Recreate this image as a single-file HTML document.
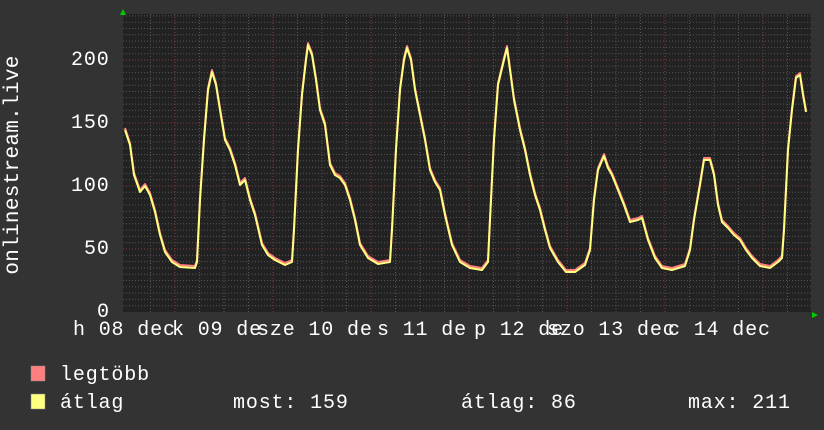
<!DOCTYPE html>
<html><head><meta charset="utf-8"><style>
html,body{margin:0;padding:0;background:#333;}
body{width:824px;height:430px;position:relative;overflow:hidden;font-family:"Liberation Mono","DejaVu Sans Mono",monospace;color:#fff;}
.t{position:absolute;font-size:20px;line-height:20px;white-space:pre;letter-spacing:0.85px;}
</style></head><body>
<svg width="824" height="430" style="position:absolute;left:0;top:0">
<rect x="123" y="14" width="688" height="298" fill="#222"/>
<g id="g"></g>
<polygon points="123,9 120,15 126,15" fill="#0c0"/>
<polygon points="818,315 812,312 812,318" fill="#0c0"/>
<g fill="none" stroke-width="2" stroke-linejoin="round">
<polyline stroke="#ff7f7f" transform="translate(0,-2)" points="125,130 130,145 134,175 140,192 145,186 150,195 155,212 160,235 165,252 172,262 180,267 195,268 197,262 200,200 204,140 208,90 212,72 216,85 220,110 225,140 230,150 235,165 240,185 245,180 250,200 255,215 262,245 268,255 275,260 285,265 292,262 294,230 298,150 302,95 306,60 308,45 312,55 316,80 320,110 325,125 330,165 335,175 340,178 345,185 350,200 355,220 360,245 368,258 378,264 390,262 392,230 396,150 400,90 404,60 407,48 411,60 415,90 420,115 425,140 430,170 435,182 440,190 445,215 452,245 460,262 470,268 482,270 488,262 490,220 494,140 498,85 504,60 507,48 510,70 514,100 520,130 525,150 530,175 535,195 540,210 545,230 550,248 558,262 566,272 575,272 585,265 590,250 594,200 598,170 604,156 608,168 612,175 618,190 624,205 630,222 638,220 642,218 648,240 655,258 662,268 672,270 685,266 690,250 694,220 700,185 704,160 710,160 714,175 718,205 722,222 728,228 734,235 740,240 746,250 752,258 760,266 770,268 778,262 782,258 784,230 788,150 792,110 796,78 800,75 803,95 806,112"/>
<polyline stroke="#ffff80" points="125,130 130,145 134,175 140,192 145,186 150,195 155,212 160,235 165,252 172,262 180,267 195,268 197,262 200,200 204,140 208,90 212,72 216,85 220,110 225,140 230,150 235,165 240,185 245,180 250,200 255,215 262,245 268,255 275,260 285,265 292,262 294,230 298,150 302,95 306,60 308,45 312,55 316,80 320,110 325,125 330,165 335,175 340,178 345,185 350,200 355,220 360,245 368,258 378,264 390,262 392,230 396,150 400,90 404,60 407,48 411,60 415,90 420,115 425,140 430,170 435,182 440,190 445,215 452,245 460,262 470,268 482,270 488,262 490,220 494,140 498,85 504,60 507,48 510,70 514,100 520,130 525,150 530,175 535,195 540,210 545,230 550,248 558,262 566,272 575,272 585,265 590,250 594,200 598,170 604,156 608,168 612,175 618,190 624,205 630,222 638,220 642,218 648,240 655,258 662,268 672,270 685,266 690,250 694,220 700,185 704,160 710,160 714,175 718,205 722,222 728,228 734,235 740,240 746,250 752,258 760,266 770,268 778,262 782,258 784,230 788,150 792,110 796,78 800,75 803,95 806,112"/>
</g>
<rect x="31" y="366" width="14" height="15" fill="#ff7f7f" stroke="#888" stroke-width="0.5"/>
<rect x="31" y="394" width="14" height="15" fill="#ffff80" stroke="#888" stroke-width="0.5"/>
<text x="18" y="165" fill="#fff" font-family="Liberation Mono,monospace" font-size="21" letter-spacing="0.3" text-anchor="middle" dominant-baseline="auto" transform="rotate(-90 18 165)">onlinestream.live</text>
</svg>
<script>
var g=document.getElementById('g'),s='';
for(var v=5;v<=235;v+=5){var y=312-v*1.26;if(y<14)break;var maj=v%50==0;s+='<line x1="123" x2="811" y1="'+y+'" y2="'+y+'" stroke="'+(maj?'#8a3a3a':'#555')+'" stroke-width="1" stroke-dasharray="1,2"/>';}
for(var x=150.5;x<811;x+=24.5){var d=Math.abs(((x-174)/98)-Math.round((x-174)/98))<0.05;s+='<line y1="14" y2="312" x1="'+x+'" x2="'+x+'" stroke="'+(d?'#8a3a3a':'#555')+'" stroke-width="1" stroke-dasharray="1,2"/>';}
g.innerHTML=s;
</script>
<div class="t" style="left:71px;top:51px">200</div>
<div class="t" style="left:71px;top:114px">150</div>
<div class="t" style="left:71px;top:177px">100</div>
<div class="t" style="left:84px;top:240px">50</div>
<div class="t" style="left:97px;top:303px">0</div>
<div class="t" style="left:73px;top:321px">h 08 dec</div>
<div class="t" style="left:172px;top:321px">k 09 de</div>
<div class="t" style="left:257px;top:321px">sze 10 de</div>
<div class="t" style="left:377px;top:321px">s 11 de</div>
<div class="t" style="left:474px;top:321px">p 12 de</div>
<div class="t" style="left:547px;top:321px">szo 13 dec</div>
<div class="t" style="left:668px;top:321px">c 14 dec</div>
<div class="t" style="left:60px;top:366px">legtöbb</div>
<div class="t" style="left:60px;top:394px">átlag</div>
<div class="t" style="left:233px;top:394px">most: 159</div>
<div class="t" style="left:461px;top:394px">átlag: 86</div>
<div class="t" style="left:688px;top:394px">max: 211</div>
</body></html>
